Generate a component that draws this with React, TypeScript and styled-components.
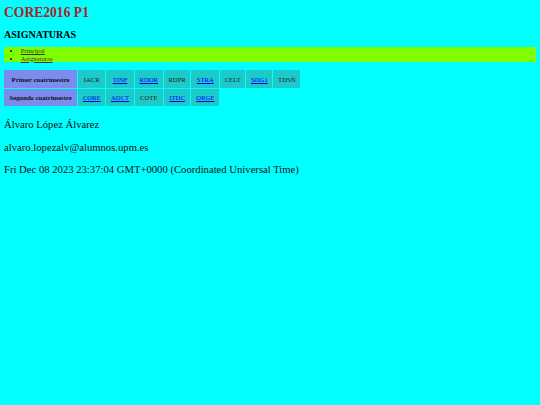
import React from 'react'
import styled, { createGlobalStyle } from 'styled-components'

const GlobalStyle = createGlobalStyle`
  html, body {
    background: #00ffff;
  }
  body {
    margin: 4px;
    font-family: "Liberation Serif", "Times New Roman", serif;
    font-size: 10.67px;
    color: #111;
  }
`

const Title = styled.h1`
  margin: 1px 0 0;
  font-size: 13.6px;
  line-height: 15px;
  color: #b22222;
`

const Section = styled.h2`
  margin: 9px 0 0;
  font-size: 10px;
  line-height: 12px;
  color: #000;
`

const Nav = styled.ul`
  margin: 6px 0 0;
  padding: 0 0 0 16.7px;
  background: #80ff00;
  font-size: 6.67px;
  line-height: 7.67px;
`

const NavItem = styled.li`
  a {
    color: #333;
  }
`

const Table = styled.table`
  margin-top: 7px;
  border-spacing: 1px;
  margin-left: -1px;
  font-size: 6.67px;
`

const Head = styled.th`
  padding: 5.2px 5.5px;
  background: #7b8cee;
  color: #111;
  text-align: center;
`

const Cell = styled.td`
  padding: 5.2px 4.7px;
  background: #1ccaca;
  color: #222;
  text-align: center;

  a {
    color: #0000ee;
  }
`

const Line = styled.p`
  margin: 10.67px 0;
  line-height: 12.2px;
`

const semesters: { name: string; subjects: [string, boolean][] }[] = [
  {
    name: 'Primer cuatrimestre',
    subjects: [
      ['IACR', false],
      ['TINF', true],
      ['RDOR', true],
      ['RDPR', false],
      ['STRA', true],
      ['CELT', false],
      ['SDG1', true],
      ['TDSÑ', false],
    ],
  },
  {
    name: 'Segundo cuatrimestre',
    subjects: [
      ['CORE', true],
      ['ADCT', true],
      ['COTE', false],
      ['ITDC', true],
      ['ORGE', true],
    ],
  },
]

const App = () => {
  return (
    <>
      <GlobalStyle />
      <Title>CORE2016 P1</Title>
      <Section>ASIGNATURAS</Section>
      <Nav>
        <NavItem><a href="#">Principal</a></NavItem>
        <NavItem><a href="#">Asignaturas</a></NavItem>
      </Nav>
      <Table>
        <tbody>
          {semesters.map((s) => (
            <tr key={s.name}>
              <Head>{s.name}</Head>
              {s.subjects.map(([code, linked]) => (
                <Cell key={code}>{linked ? <a href="#">{code}</a> : code}</Cell>
              ))}
            </tr>
          ))}
        </tbody>
      </Table>
      <Line>Álvaro López Álvarez</Line>
      <Line>alvaro.lopezalv@alumnos.upm.es</Line>
      <Line>Fri Dec 08 2023 23:37:04 GMT+0000 (Coordinated Universal Time)</Line>
    </>
  )
}

export default App
